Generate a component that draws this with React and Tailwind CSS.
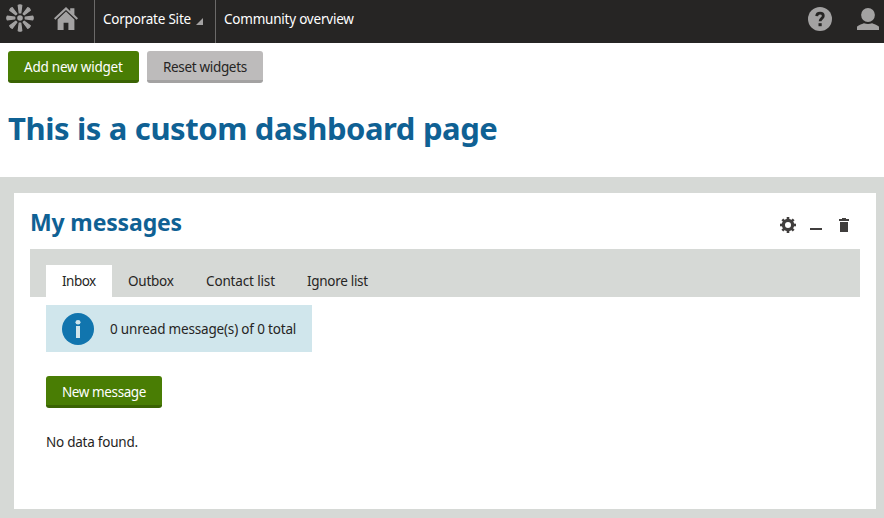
const Logo = () => (
  <svg width="28" height="28" viewBox="-14 -14 28 28" className="block" stroke="#a3a2a2" fill="#a3a2a2">
    {[0, 45, 90, 135, 180, 225, 270, 315].map((angle) => (
      <g key={angle} transform={`rotate(${angle})`}>
        <path d="M-.8-5.2-1.800-12.800Q0-13.700 1.800-12.800L.8-5.200Z" strokeWidth="1.200" strokeLinejoin="round" />
      </g>
    ))}
    <circle r="2.800" stroke="none" />
  </svg>
);

const Home = () => (
  <svg width="24" height="23" viewBox="0 0 24 23" className="block" fill="#a3a2a2">
    <path d="M0 11.2 12 0l4.2 3.9V1.2h4.2v6.6L24 11.2l-1.4 1.5L12 2.9 1.4 12.7Z" />
    <path d="M12 4.6 20.4 12.5V23H14.4v-7.2H9.6V23H3.6V12.5Z" />
  </svg>
);

const Help = () => (
  <svg width="24" height="24" viewBox="0 0 24 24" className="block">
    <circle cx="12" cy="12" r="12" fill="#a3a2a2" />
    <path d="M8.7 9.1C8.800 7 10.1 6.200 12 6.200c2 0 3.300 1.100 3.300 2.700 0 2.400-3.200 2.500-3.200 5.400" fill="none" stroke="#262524" strokeWidth="2.800" />
    <rect x="10.500" y="16.2" width="3.200" height="3" fill="#262524" />
  </svg>
);

const User = () => (
  <svg width="22" height="22" viewBox="0 0 22 22" className="block" fill="#a3a2a2">
    <ellipse cx="11" cy="7" rx="6.900" ry="7" />
    <path d="M0 22v-3.200C1 17 5 16.200 7 15.200q4 1.400 8 0c2 1 6 1.800 7 3.600V22Z" />
  </svg>
);

const Gear = () => (
  <svg width="16" height="16" viewBox="-8 -8 16 16" className="block" fill="#403e3d">
    {[0, 45, 90, 135, 180, 225, 270, 315].map((angle) => (
      <rect key={angle} x="-1.3" y="-8" width="2.600" height="3.500" transform={`rotate(${angle})`} />
    ))}
    <circle r="4.600" fill="none" stroke="#403e3d" strokeWidth="3.200" />
  </svg>
);

const Trash = () => (
  <svg width="10" height="14" viewBox="0 0 10 14" className="block" fill="#403e3d">
    <path d="M3 0h4v1h3v2H0V1h3ZM1 4h8v10H1Z" />
  </svg>
);

const Info = () => (
  <svg width="32" height="32" viewBox="0 0 32 32" className="block">
    <circle cx="16" cy="16" r="16" fill="#1175ae" />
    <ellipse cx="16" cy="9.200" rx="2.500" ry="2.200" fill="#d0e6ec" />
    <rect x="14" y="13" width="4" height="12" fill="#d0e6ec" />
  </svg>
);

export default function App() {
  return (
    <div className="flex h-[518px] w-[884px] flex-col overflow-hidden bg-white font-['Noto_Sans',sans-serif] text-[13.5px] leading-5 whitespace-nowrap text-[#262524]">
      <header className="flex h-[43px] shrink-0 bg-[#262524] text-white">
        <div className="flex w-[94px] shrink-0 gap-[20px] pl-[6px]">
          <div className="pt-[4px]"><Logo /></div>
          <div className="pt-[7px]"><Home /></div>
        </div>
        <div className="flex w-[121px] border-l border-[#6b6a69] pt-[9px] pl-[8px]">
          <span className="w-[93px] tracking-[-0.22px]">Corporate Site</span>
          <svg width="7" height="7" className="mt-[9px] block" fill="#a3a2a2"><path d="M7 0v7H0Z" /></svg>
        </div>
        <div className="flex-1 border-l border-[#6b6a69] pt-[9px] pl-[8px]">
          <span className="tracking-[-0.22px]">Community overview</span>
        </div>
        <div className="flex gap-[25px] pr-[5px]">
          <div className="pt-[7px]"><Help /></div>
          <div className="pt-[8px]"><User /></div>
        </div>
      </header>
      <div className="flex shrink-0 gap-2 px-2 pt-2">
        <button className="h-8 w-[131px] rounded-[3px] border-b-[3px] border-[#3a6303] bg-[#497d04] pt-[2px] pl-4 text-left text-white"><span className="tracking-[-0.22px]">Add new widget</span></button>
        <button className="h-8 w-[116px] rounded-[3px] border-b-[3px] border-[#a3a2a2] bg-[#bdbbbb] pt-[2px] pl-4 text-left"><span className="tracking-[-0.33px]">Reset widgets</span></button>
      </div>
      <h1 className="h-[94px] shrink-0 pt-[25px] pl-2 text-[31px] leading-10 font-bold text-[#0f6194]"><span className="tracking-[-0.45px] [word-spacing:0.3px]">This is a custom dashboard page</span></h1>
      <main className="flex-1 bg-[#d6d9d6] pt-4 pr-2 pl-[14px]">
        <section className="h-[316px] bg-white px-4">
          <div className="flex h-[56px] justify-between">
            <h2 className="pt-[13px] text-[23px] leading-8 font-bold text-[#0f6194]"><span className="tracking-[-0.15px]">My messages</span></h2>
            <div className="flex pt-6 pr-[11px]">
              <Gear />
              <div className="mt-[11px] ml-[14px] h-[2px] w-3 bg-[#403e3d]" />
              <div className="ml-[17px] pt-[1px]"><Trash /></div>
            </div>
          </div>
          <nav className="flex h-12 bg-[#d6d9d6] px-4 pt-4">
            <div className="w-[66px] bg-white pt-[6px] pl-4"><span className="tracking-[-0.5px]">Inbox</span></div>
            <div className="w-[78px] pt-[6px] pl-4"><span className="tracking-[-0.25px]">Outbox</span></div>
            <div className="w-[101px] pt-[6px] pl-4"><span className="tracking-[-0.15px]">Contact list</span></div>
            <div className="pt-[6px] pl-4"><span className="tracking-[-0.3px]">Ignore list</span></div>
          </nav>
          <div className="px-4 pt-2">
            <div className="flex h-[47px] w-[266px] gap-4 bg-[#d0e6ec] pt-2 pl-4">
              <Info />
              <p className="pt-[6px]"><span className="tracking-[-0.18px]">0 unread message(s) of 0 total</span></p>
            </div>
            <button className="mt-6 block h-8 w-[116px] rounded-[3px] border-b-[3px] border-[#3a6303] bg-[#497d04] pt-[2px] pl-4 text-left text-white"><span className="tracking-[-0.4px]">New message</span></button>
            <p className="mt-6"><span className="tracking-[-0.24px]">No data found.</span></p>
          </div>
        </section>
      </main>
    </div>
  );
}
